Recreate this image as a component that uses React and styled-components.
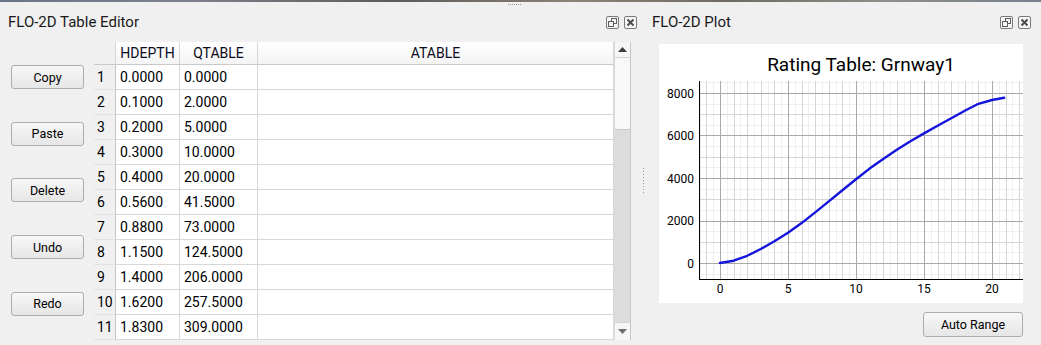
import React from "react";
import styled, { createGlobalStyle } from "styled-components";

const GlobalStyle = createGlobalStyle`
  html, body { margin: 0; padding: 0; background: #f0f0f0; overflow: hidden; }
  body { font-family: Roboto, "Noto Sans", sans-serif; color: #000; }
`;

const rows = [
  ["0.0000", "0.0000"],
  ["0.1000", "2.0000"],
  ["0.2000", "5.0000"],
  ["0.3000", "10.0000"],
  ["0.4000", "20.0000"],
  ["0.5600", "41.5000"],
  ["0.8800", "73.0000"],
  ["1.1500", "124.5000"],
  ["1.4000", "206.0000"],
  ["1.6200", "257.5000"],
  ["1.8300", "309.0000"],
];

const curve = [
  [0, 0], [1, 110], [2, 340], [3, 660], [4, 1020], [5, 1420], [6, 1880],
  [7, 2380], [8, 2900], [9, 3420], [10, 3940], [11, 4440], [12, 4900],
  [13, 5330], [14, 5730], [15, 6100], [16, 6460], [17, 6810], [18, 7160],
  [19, 7490], [20, 7670], [20.9, 7780],
];

const Page = styled.div`
  position: relative;
  width: 1041px;
  height: 345px;
  display: flex;
  flex-direction: column;
  background: #f0f0f0;
`;

const TopStrip = styled.div`
  height: 2px;
  background: linear-gradient(90deg, #6b7488 0%, #7d818c 18%, #5e5b59 38%, #8b8278 55%, #6f6b63 70%, #8d8f89 85%, #77808c 100%);
`;

const TopGrip = styled.div`
  position: absolute;
  left: 508px;
  top: 4px;
  display: flex;
  gap: 1px;
`;

const Dot = styled.span`
  width: 1px;
  height: 1px;
  background: #9a9a9a;
`;

const Main = styled.div`
  flex: 1;
  display: flex;
`;

const Dock = styled.div`
  width: ${(p) => p.$width};
  flex: ${(p) => (p.$grow ? 1 : "none")};
  display: flex;
  flex-direction: column;
`;

const TitleBar = styled.div`
  height: 40px;
  display: flex;
  align-items: center;
  padding: 0 ${(p) => p.$padRight}px 0 ${(p) => p.$padLeft}px;
  box-sizing: border-box;
`;

const TitleText = styled.div`
  flex: 1;
  font-size: 15px;
  color: #1a1a1a;
`;

const IconGroup = styled.div`
  display: flex;
  gap: 5px;
  margin-top: 1px;
`;

const DockBody = styled.div`
  flex: 1;
  display: flex;
`;

const ButtonColumn = styled.div`
  width: 94px;
  box-sizing: border-box;
  padding: 23px 0 0 11px;
  display: flex;
  flex-direction: column;
  gap: 32.7px;
`;

const ToolButton = styled.button`
  width: ${(p) => p.$width || 73}px;
  height: ${(p) => p.$height || 24}px;
  padding: 0;
  font-family: Roboto, sans-serif;
  font-size: 12.5px;
  color: #000;
  background: linear-gradient(#f7f7f7, #e6e6e6);
  border: 1px solid #adadad;
  border-radius: 3px;
`;

const TableFrame = styled.div`
  display: flex;
  height: 298px;
`;

const Table = styled.div`
  width: 520px;
  display: flex;
  flex-direction: column;
  background: #fff;
`;

const cols = "22px 64px 78px 356px";

const HeaderRow = styled.div`
  display: grid;
  grid-template-columns: ${cols};
  height: 23px;
  background: #f0f0f0;
`;

const HeaderCell = styled.div`
  display: flex;
  align-items: center;
  justify-content: center;
  font-size: 14px;
  color: #0b0b20;
  box-sizing: border-box;
  background: ${(p) => (p.$corner ? "#f0f0f0" : "linear-gradient(#ffffff, #f4f4f4)")};
  border-right: 1px solid #d6d6d6;
  border-bottom: 1px solid #c9c9c9;
`;

const BodyRow = styled.div`
  display: grid;
  grid-template-columns: ${cols};
  height: 25px;
`;

const Cell = styled.div`
  display: flex;
  align-items: center;
  padding-left: ${(p) => (p.$rowHead ? 3 : 4)}px;
  font-size: 14px;
  box-sizing: border-box;
  background: ${(p) => (p.$rowHead ? "#f0f0f0" : "#fff")};
  border-right: 1px solid ${(p) => (p.$rowHead ? "#c4c4c4" : "#d8d8d8")};
  border-bottom: 1px solid ${(p) => (p.$rowHead ? "#e2e2e2" : "#d8d8d8")};
`;

const ScrollBar = styled.div`
  width: 17px;
  box-sizing: border-box;
  display: flex;
  flex-direction: column;
  background: #f8f8f8;
  border-left: 1px solid #dcdcdc;
  border-right: 1px solid #c6c6c6;
`;

const ScrollArrow = styled.div`
  height: ${(p) => p.$h}px;
  display: flex;
  align-items: center;
  justify-content: center;
  background: #f6f6f6;
  border-${(p) => (p.$up ? "bottom" : "top")}: 1px solid #d4d4d4;
  box-sizing: border-box;
`;

const Track = styled.div`
  flex: 1;
  display: flex;
  flex-direction: column;
  justify-content: flex-end;
`;

const Handle = styled.div`
  height: 192px;
  background: #dcdcdc;
  border-top: 1px solid #cacaca;
`;

const Splitter = styled.div`
  width: 6px;
  display: flex;
  flex-direction: column;
  align-items: center;
  padding-top: 166px;
  gap: 2px;
`;

const PlotBody = styled.div`
  flex: 1;
  display: flex;
  flex-direction: column;
  align-items: flex-start;
  padding: 2px 18px 0 13px;
`;

const PlotCanvas = styled.div`
  width: 364px;
  height: 259px;
  background: #fff;
  display: flex;
  flex-direction: column;
`;

const PlotTitle = styled.div`
  height: 37px;
  box-sizing: border-box;
  padding: 4px 0 0 40px;
  display: flex;
  align-items: center;
  justify-content: center;
  font-size: 19px;
  color: #000;
`;

const ButtonRow = styled.div`
  width: 364px;
  display: flex;
  justify-content: flex-end;
  margin-top: 9px;
`;

const FloatIcon = () => (
  <svg width="13" height="13" viewBox="0 0 13 13">
    <rect x="0.5" y="0.5" width="12" height="12" rx="1.5" fill="#f6f6f6" stroke="#7a7a7a" />
    <rect x="5.5" y="2.5" width="5" height="5" fill="none" stroke="#5e5e5e" />
    <rect x="2.5" y="5.5" width="5" height="5" fill="#f6f6f6" stroke="#5e5e5e" />
  </svg>
);

const CloseIcon = () => (
  <svg width="13" height="13" viewBox="0 0 13 13">
    <rect x="0.5" y="0.5" width="12" height="12" rx="1.5" fill="#f6f6f6" stroke="#7a7a7a" />
    <path d="M3.5 3.5 L9.5 9.5 M9.5 3.5 L3.5 9.5" stroke="#4c4c4c" strokeWidth="2" />
  </svg>
);

const DockIcons = () => (
  <IconGroup>
    <FloatIcon />
    <CloseIcon />
  </IconGroup>
);

const xs = (u) => 61 + u * 13.6;
const ys = (v) => 182 - v * 0.02125;

const Chart = () => {
  const vLines = [];
  for (let k = -3; k <= 44; k++) {
    const u = k / 2;
    const x = Math.round(xs(u)) + 0.5;
    if (x < 41 || x > 364) continue;
    const level = k % 10 === 0 ? 2 : k % 2 === 0 ? 1 : 0;
    vLines.push({ x, level });
  }
  const hLines = [];
  for (let k = -1; k <= 17; k++) {
    const v = k * 500;
    const y = Math.round(ys(v)) + 0.5;
    if (y < 0 || y > 197) continue;
    const level = v % 2000 === 0 ? 2 : v % 1000 === 0 ? 1 : 0;
    hLines.push({ y, level });
  }
  const colors = ["#efefef", "#d6d6d6", "#a9a9a9"];
  const pts = curve.map(([u, v]) => `${xs(u).toFixed(1)},${ys(v).toFixed(1)}`).join(" ");
  return (
    <svg width="364" height="222" viewBox="0 0 364 222">
      {[0, 1, 2].map((lv) => (
        <g key={lv} stroke={colors[lv]} strokeWidth="1" shapeRendering="crispEdges">
          {vLines.filter((l) => l.level === lv).map((l) => (
            <line key={l.x} x1={l.x} y1="0" x2={l.x} y2="198" />
          ))}
          {hLines.filter((l) => l.level === lv).map((l) => (
            <line key={l.y} x1="40" y1={l.y} x2="364" y2={l.y} />
          ))}
        </g>
      ))}
      <polyline points={pts} fill="none" stroke="#1414dc" strokeWidth="2.4" strokeLinejoin="round" strokeLinecap="round" />
      <g stroke="#000" strokeWidth="1" shapeRendering="crispEdges">
        <line x1="40.5" y1="0" x2="40.5" y2="198" />
        <line x1="40" y1="198.5" x2="364" y2="198.5" />
      </g>
      <g fontFamily="Roboto, sans-serif" fontSize="12" fill="#000">
        {[0, 2000, 4000, 6000, 8000].map((v) => (
          <text key={v} x="35" y={ys(v) + 4.5} textAnchor="end">{v}</text>
        ))}
        {[0, 5, 10, 15, 20].map((u) => (
          <text key={u} x={xs(u)} y="212" textAnchor="middle">{u}</text>
        ))}
      </g>
    </svg>
  );
};

export default function App() {
  return (
    <Page>
      <GlobalStyle />
      <TopStrip />
      <TopGrip>
        {Array.from({ length: 7 }).map((_, i) => <Dot key={i} />)}
      </TopGrip>
      <Main>
        <Dock $width="640px">
          <TitleBar $padLeft={8} $padRight={3}>
            <TitleText>FLO-2D Table Editor</TitleText>
            <DockIcons />
          </TitleBar>
          <DockBody>
            <ButtonColumn>
              <ToolButton>Copy</ToolButton>
              <ToolButton>Paste</ToolButton>
              <ToolButton>Delete</ToolButton>
              <ToolButton>Undo</ToolButton>
              <ToolButton>Redo</ToolButton>
            </ButtonColumn>
            <TableFrame>
              <Table>
                <HeaderRow>
                  <HeaderCell $corner />
                  <HeaderCell>HDEPTH</HeaderCell>
                  <HeaderCell>QTABLE</HeaderCell>
                  <HeaderCell>ATABLE</HeaderCell>
                </HeaderRow>
                {rows.map(([h, q], i) => (
                  <BodyRow key={i}>
                    <Cell $rowHead>{i + 1}</Cell>
                    <Cell>{h}</Cell>
                    <Cell>{q}</Cell>
                    <Cell />
                  </BodyRow>
                ))}
              </Table>
              <ScrollBar>
                <ScrollArrow $up $h={16}>
                  <svg width="9" height="5" viewBox="0 0 9 5"><polygon points="0,5 4.5,0 9,5" fill="#3c3c3c" /></svg>
                </ScrollArrow>
                <Track>
                  <Handle />
                </Track>
                <ScrollArrow $h={18}>
                  <svg width="9" height="5" viewBox="0 0 9 5"><polygon points="0,0 4.5,5 9,0" fill="#6e6e6e" /></svg>
                </ScrollArrow>
              </ScrollBar>
            </TableFrame>
          </DockBody>
        </Dock>
        <Splitter>
          {Array.from({ length: 9 }).map((_, i) => <Dot key={i} />)}
        </Splitter>
        <Dock $grow>
          <TitleBar $padLeft={6} $padRight={10}>
            <TitleText>FLO-2D Plot</TitleText>
            <DockIcons />
          </TitleBar>
          <PlotBody>
            <PlotCanvas>
              <PlotTitle>Rating Table: Grnway1</PlotTitle>
              <Chart />
            </PlotCanvas>
            <ButtonRow>
              <ToolButton $width={100} $height={25}>Auto Range</ToolButton>
            </ButtonRow>
          </PlotBody>
        </Dock>
      </Main>
    </Page>
  );
}
